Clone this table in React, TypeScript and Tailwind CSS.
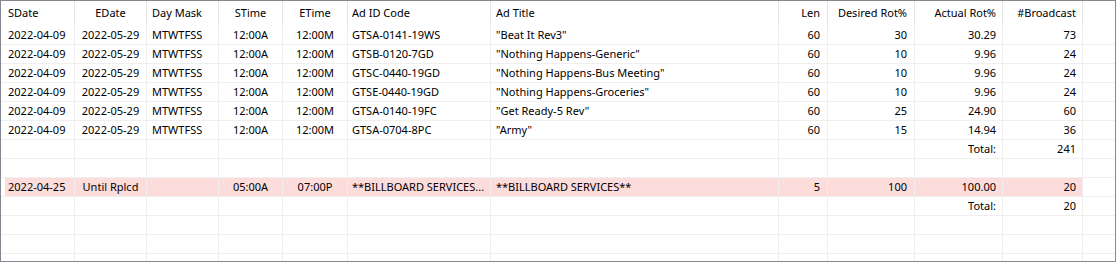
import React from "react";

type Row = {
  s?: string; e?: string; m?: string; st?: string; et?: string; code?: string; title?: string;
  len?: string; des?: string; act?: string; bc?: string; pink?: boolean;
};

const rows: Row[] = [
  { s: "2022-04-09", e: "2022-05-29", m: "MTWTFSS", st: "12:00A", et: "12:00M", code: "GTSA-0141-19WS", title: "\"Beat It Rev3\"", len: "60", des: "30", act: "30.29", bc: "73" },
  { s: "2022-04-09", e: "2022-05-29", m: "MTWTFSS", st: "12:00A", et: "12:00M", code: "GTSB-0120-7GD", title: "\"Nothing Happens-Generic\"", len: "60", des: "10", act: "9.96", bc: "24" },
  { s: "2022-04-09", e: "2022-05-29", m: "MTWTFSS", st: "12:00A", et: "12:00M", code: "GTSC-0440-19GD", title: "\"Nothing Happens-Bus Meeting\"", len: "60", des: "10", act: "9.96", bc: "24" },
  { s: "2022-04-09", e: "2022-05-29", m: "MTWTFSS", st: "12:00A", et: "12:00M", code: "GTSE-0440-19GD", title: "\"Nothing Happens-Groceries\"", len: "60", des: "10", act: "9.96", bc: "24" },
  { s: "2022-04-09", e: "2022-05-29", m: "MTWTFSS", st: "12:00A", et: "12:00M", code: "GTSA-0140-19FC", title: "\"Get Ready-5 Rev\"", len: "60", des: "25", act: "24.90", bc: "60" },
  { s: "2022-04-09", e: "2022-05-29", m: "MTWTFSS", st: "12:00A", et: "12:00M", code: "GTSA-0704-8PC", title: "\"Army\"", len: "60", des: "15", act: "14.94", bc: "36" },
  { act: "Total:", bc: "241" },
  {},
  { s: "2022-04-25", e: "Until Rplcd", m: "", st: "05:00A", et: "07:00P", code: "**BILLBOARD SERVICES...", title: "**BILLBOARD SERVICES**", len: "5", des: "100", act: "100.00", bc: "20", pink: true },
  { act: "Total:", bc: "20" },
  {},
  {},
  {},
];

const grid =
  "grid grid-cols-[4px_70px_72px_72px_64px_65px_143px_288px_49px_87px_88px_80px_1fr]";

function Cell({ children, cls, pink }: { children?: React.ReactNode; cls: string; pink?: boolean }) {
  return (
    <div
      className={`flex items-center h-full border-r border-[#efefef] whitespace-nowrap overflow-hidden ${pink ? "bg-[#fddcdc]" : ""} ${cls}`}
    >
      {children}
    </div>
  );
}

export default function App() {
  return (
    <div
      className="w-[1116px] h-[262px] border border-[#828790] bg-white overflow-hidden text-black text-[11px]"
      style={{ fontFamily: '"Noto Sans", "Open Sans", sans-serif' }}
    >
      <div className={`${grid} h-[25px]`}>
        <div />
        <div className="flex items-center border-r border-[#e5e5e5] pl-[3px]">SDate</div>
        <div className="flex items-center justify-center border-r border-[#e5e5e5]">EDate</div>
        <div className="flex items-center border-r border-[#e5e5e5] pl-[5px]">Day Mask</div>
        <div className="flex items-center justify-center border-r border-[#e5e5e5]">STime</div>
        <div className="flex items-center justify-center border-r border-[#e5e5e5]">ETime</div>
        <div className="flex items-center border-r border-[#e5e5e5] pl-[4px]">Ad ID Code</div>
        <div className="flex items-center border-r border-[#e5e5e5] pl-[5px]">Ad Title</div>
        <div className="flex items-center justify-end border-r border-[#e5e5e5] pr-[7px]">Len</div>
        <div className="flex items-center justify-end border-r border-[#e5e5e5] pr-[7px]">Desired Rot%</div>
        <div className="flex items-center justify-end border-r border-[#e5e5e5] pr-[6px]">Actual Rot%</div>
        <div className="flex items-center justify-end border-r border-[#e5e5e5] pr-[6px]">#Broadcast</div>
        <div />
      </div>
      {rows.map((r, i) => (
        <div key={i} className={`${grid} h-[19px] border-b border-[#efefef]`}>
          <div />
          <Cell pink={r.pink} cls="pl-[3px]">{r.s}</Cell>
          <Cell pink={r.pink} cls="justify-center">{r.e}</Cell>
          <Cell pink={r.pink} cls="pl-[5px]">{r.m}</Cell>
          <Cell pink={r.pink} cls="justify-center">{r.st}</Cell>
          <Cell pink={r.pink} cls="justify-center">{r.et}</Cell>
          <Cell pink={r.pink} cls="pl-[4px]">{r.code}</Cell>
          <Cell pink={r.pink} cls="pl-[5px]">{r.title}</Cell>
          <Cell pink={r.pink} cls="justify-end pr-[7px]">{r.len}</Cell>
          <Cell pink={r.pink} cls="justify-end pr-[7px]">{r.des}</Cell>
          <Cell pink={r.pink} cls="justify-end pr-[6px]">{r.act}</Cell>
          <Cell pink={r.pink} cls="justify-end pr-[6px]">{r.bc}</Cell>
          <div />
        </div>
      ))}
    </div>
  );
}
